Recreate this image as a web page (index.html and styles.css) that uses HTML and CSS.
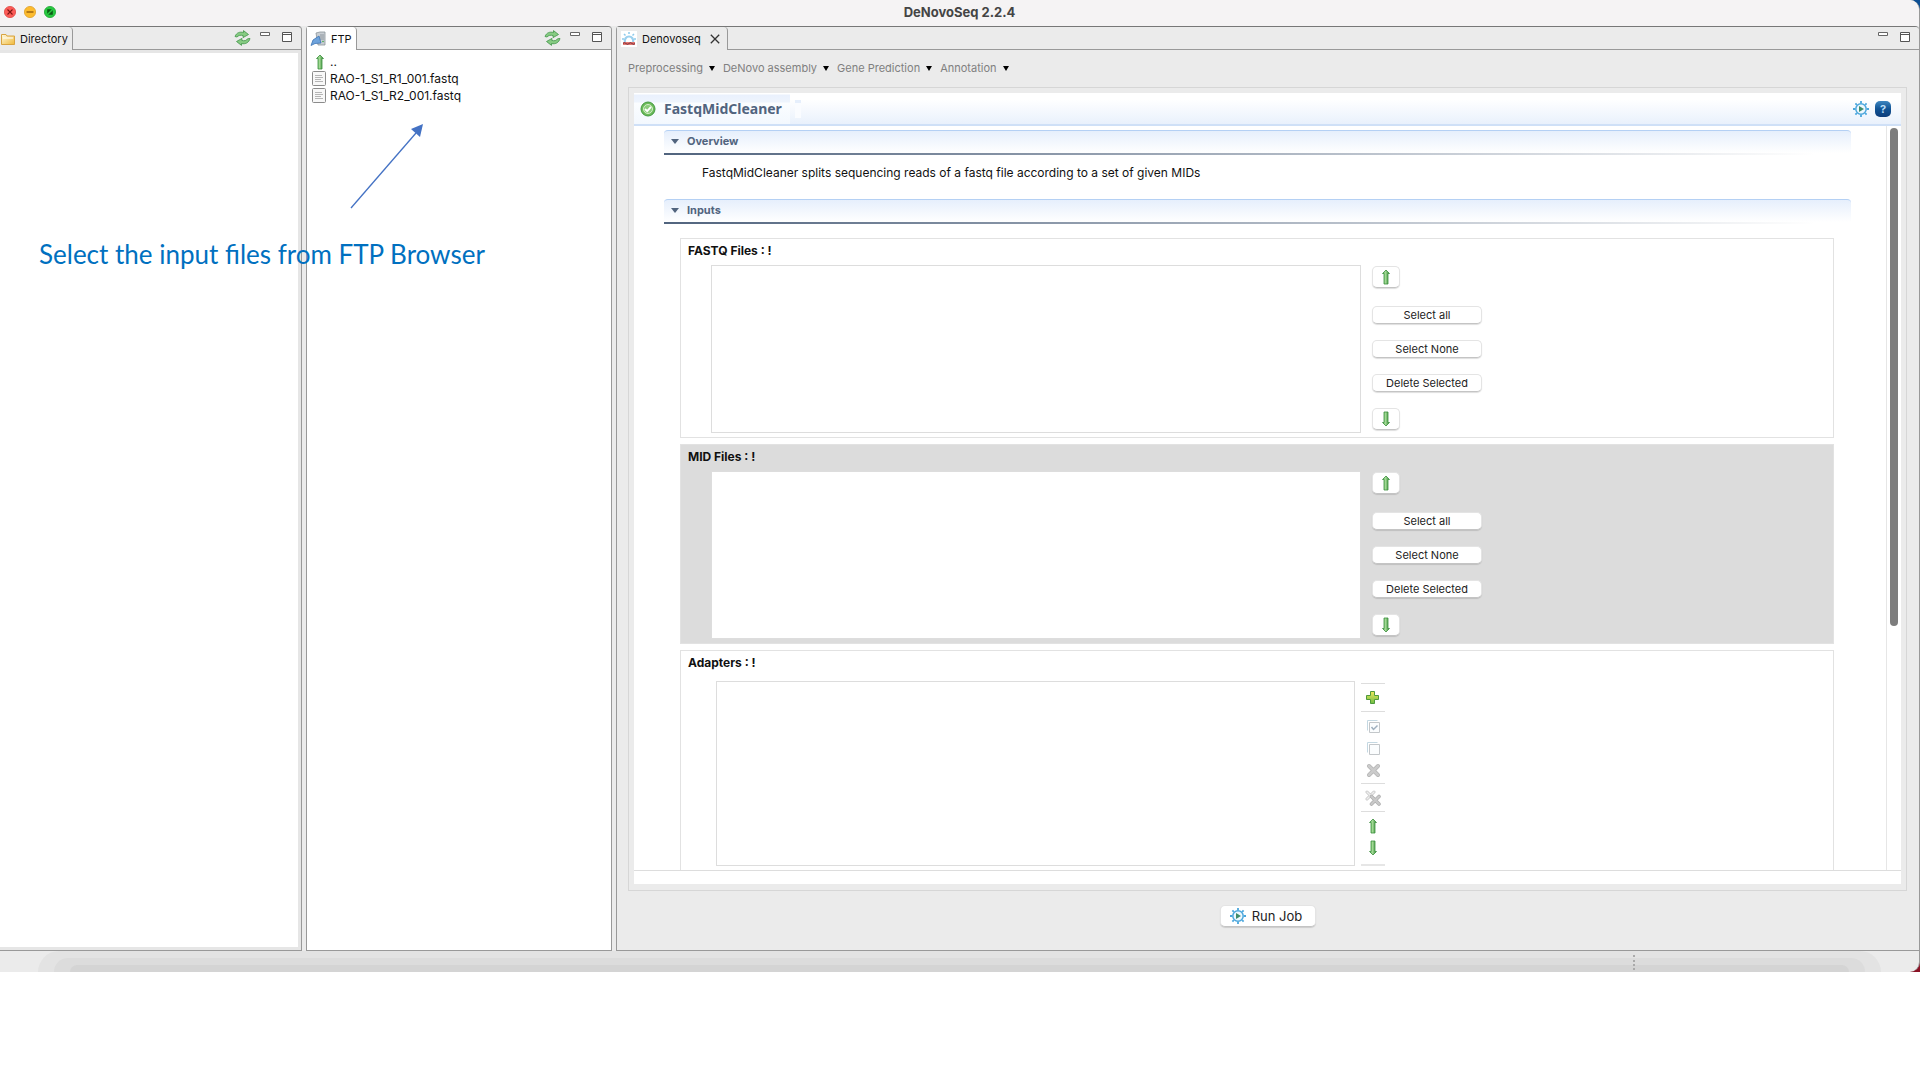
FILE: index.html
```html
<!DOCTYPE html>
<html lang="en">
<head>
<meta charset="utf-8">
<title>DeNovoSeq 2.2.4</title>
<link rel="stylesheet" href="styles.css">
</head>
<body>
<svg class="defs" aria-hidden="true">
  <defs>
    <linearGradient id="green" x1="0" x2="1"><stop offset="0" stop-color="#4ea64e"/><stop offset=".4" stop-color="#a6dd98"/><stop offset="1" stop-color="#2a812c"/></linearGradient>
    <linearGradient id="lime" x1="0" x2="0" y1="0" y2="1"><stop offset="0" stop-color="#f0e95c"/><stop offset="1" stop-color="#6dbd45"/></linearGradient>
    <linearGradient id="gold" x1="0" x2="1" y1="0" y2="1"><stop offset="0" stop-color="#fffbe0"/><stop offset="1" stop-color="#f0b93a"/></linearGradient>
  </defs>
  <symbol id="up" viewBox="0 0 16 16"><path d="M8 1 11.500 4.500H10V15H6V4.500H4.500Z" fill="url(#green)" stroke="#3b8f3d" stroke-width=".8"/></symbol>
  <symbol id="down" viewBox="0 0 16 16"><path d="M8 15 11.500 11.500H10V1H6V11.500H4.500Z" fill="url(#green)" stroke="#3b8f3d" stroke-width=".8"/></symbol>
  <symbol id="sync" viewBox="0 0 17 16"><g fill="#86cb82" stroke="#3f9447" stroke-width=".8" stroke-linejoin="round"><path d="M1 6.500C2.500 2.500 6 1.500 9.500 2.500L9.500 .6 14.500 4.500 9 7.600 9.200 5.600C6.500 4.800 4.500 5.400 3 7Z"/><path d="M16 8.500C15 12.500 11.500 14.500 7.500 13.500L7.500 15.400 2.500 11.500 8 8.400 7.800 10.400C10.500 11.200 12.500 10.600 13.500 8.800Z"/></g></symbol>
  <symbol id="min" viewBox="0 0 10 4"><path d="M.5 .5H9.500V3.500H.5Z" fill="#fff" stroke="#666"/></symbol>
  <symbol id="max" viewBox="0 0 10 10"><path d="M.5 .5H9.500V9.500H.5ZM.5 2.500H9.500" fill="#fff" stroke="#555"/></symbol>
  <symbol id="gear" viewBox="0 0 16 16"><circle cx="8" cy="8" r="5.200" fill="#eef8fe" stroke="#4aa6dc" stroke-width="1.500"/><path d="M8 0V2M8 14V16M0 8H2M14 8H16M2.400 2.400 3.800 3.800M12.200 12.200 13.600 13.600M2.400 13.600 3.800 12.200M12.200 3.800 13.600 2.400" stroke="#4aa6dc" stroke-width="1.800"/><path d="M6 5 11 8 6 11Z" fill="#3f8c6b"/></symbol>
  <symbol id="doc" viewBox="0 0 14 15"><rect x=".5" y=".5" width="13" height="14" rx="1" fill="#f8f8f8" stroke="#8b8b8b"/><path d="M3 4.500H10M3 6.500H11M3 8.500H9M3 10.500H11" stroke="#b5b5b5"/></symbol>
  <symbol id="tri" viewBox="0 0 8 5"><path d="M0 0H8L4 5Z" fill="#51647e"/></symbol>
</svg>

<div class="desktop">
<div class="window">
  <header class="titlebar">
    <div class="lights">
      <svg viewBox="0 0 12 12"><circle cx="6" cy="6" r="5.600" fill="#fc5b57" stroke="#df4744" stroke-width=".8"/><path d="M3.500 3.500 8.500 8.500M8.500 3.500 3.500 8.500" stroke="#7c1512" stroke-width="1.100"/></svg>
      <svg viewBox="0 0 12 12"><circle cx="6" cy="6" r="5.600" fill="#fdbb2e" stroke="#de9f28" stroke-width=".8"/><path d="M2.500 6H9.500" stroke="#955f0c" stroke-width="1.400"/></svg>
      <svg viewBox="0 0 12 12"><circle cx="6" cy="6" r="5.600" fill="#27c840" stroke="#1fa733" stroke-width=".8"/><path d="M3.200 7.800V3.200H7.800ZM4.200 8.800H8.800V4.200Z" fill="#0b5a14"/><path d="M3 9 9 3" stroke="#27c840"/></svg>
    </div>
    <h1 class="title">DeNovoSeq 2.2.4</h1>
  </header>

  <main class="workbench">
    <section class="pane pane-dir">
      <div class="tabs">
        <div class="tab">
          <svg class="ic-14" viewBox="0 0 14 12"><path d="M.5 11.500V1.500H5L6 3H13.500V11.500Z" fill="url(#gold)" stroke="#d9a441"/><path d="M2 5H12" stroke="#fff"/></svg>
          Directory
        </div>
        <div class="tools">
          <button class="tool tool-sync" aria-label="Refresh"><svg class="ic-sync"><use href="#sync"/></svg></button>
          <button class="tool" aria-label="Minimize"><svg class="ic-min"><use href="#min"/></svg></button>
          <button class="tool" aria-label="Maximize"><svg class="ic-max"><use href="#max"/></svg></button>
        </div>
      </div>
      <div class="dir-body"></div>
    </section>

    <section class="pane">
      <div class="tabs">
        <div class="tab tab-white">
          <svg class="ic-16" viewBox="0 0 16 16"><path d="M6 2 10 1H15V14H8Z" fill="#c9ced3" stroke="#8c949b" stroke-width=".8"/><path d="M10 4H14M10 6H14M10 8H14" stroke="#818a92" stroke-width=".8"/><path d="M1 14.500 3 9 9 5 11 12 5 12.500Z" fill="#6ea3dc" stroke="#3c74b4" stroke-width=".8"/><circle cx="13" cy="10.500" r=".8" fill="#3da545"/></svg>
          FTP
        </div>
        <div class="tools">
          <button class="tool tool-sync" aria-label="Refresh"><svg class="ic-sync"><use href="#sync"/></svg></button>
          <button class="tool" aria-label="Minimize"><svg class="ic-min"><use href="#min"/></svg></button>
          <button class="tool" aria-label="Maximize"><svg class="ic-max"><use href="#max"/></svg></button>
        </div>
      </div>
      <ul class="files">
        <li><svg class="ic-16"><use href="#up"/></svg>..</li>
        <li><svg class="ic-file"><use href="#doc"/></svg>RAO-1_S1_R1_001.fastq</li>
        <li><svg class="ic-file"><use href="#doc"/></svg>RAO-1_S1_R2_001.fastq</li>
      </ul>
    </section>

    <section class="pane pane-main">
      <div class="tabs">
        <div class="tab tab-main">
          <svg class="ic-16" viewBox="0 0 16 16"><path d="M0 0H16V16H0Z" fill="#fff"/><path d="M4 11A4.200 4.200 0 1 1 12 11" fill="none" stroke="#9bd0ee" stroke-width="2.200"/><path d="M8 1V3M1 8H3M13 8H15M3 3 4.500 4.500M13 3 11.500 4.500" stroke="#8fcbec" stroke-width="1.500"/><path d="M2 12.500H14" stroke="#d8574e" stroke-width="2.600"/><path d="M2 12.500Q3.500 10.500 5 12.500T8 12.500T11 12.500T14 12.500" fill="none" stroke="#7d3f4c"/></svg>
          Denovoseq
          <button class="tool" aria-label="Close tab"><svg class="ic-x" viewBox="0 0 10 10"><path d="M.8 .8 9.200 9.200M9.200 .8 .8 9.200" stroke="#333" stroke-width="1.300"/></svg></button>
        </div>
        <div class="tools">
          <button class="tool" aria-label="Minimize"><svg class="ic-min"><use href="#min"/></svg></button>
          <button class="tool" aria-label="Maximize"><svg class="ic-max"><use href="#max"/></svg></button>
        </div>
      </div>

      <nav class="menus">
        <button class="menu">Preprocessing<svg viewBox="0 0 6 5"><path d="M0 0H6L3 5Z"/></svg></button>
        <button class="menu">DeNovo assembly<svg viewBox="0 0 6 5"><path d="M0 0H6L3 5Z"/></svg></button>
        <button class="menu">Gene Prediction<svg viewBox="0 0 6 5"><path d="M0 0H6L3 5Z"/></svg></button>
        <button class="menu">Annotation<svg viewBox="0 0 6 5"><path d="M0 0H6L3 5Z"/></svg></button>
      </nav>

      <div class="frame">
        <div class="form">
          <div class="form-head">
            <h2 class="form-title">
              <svg class="ic-16" viewBox="0 0 16 16"><circle cx="8" cy="8" r="7" fill="#6cba58" stroke="#429a42"/><circle cx="8" cy="8" r="4.500" fill="#8ccc7c" stroke="#d2efca"/><path d="M5 8 7.200 10.200 11 5.800" fill="none" stroke="#fff" stroke-width="1.800"/></svg>
              FastqMidCleaner
            </h2>
            <span class="notch"></span>
            <div class="head-tools">
              <button class="tool" aria-label="Run"><svg class="ic-16"><use href="#gear"/></svg></button>
              <button class="tool help" aria-label="Help">?</button>
            </div>
          </div>

          <div class="viewport">
            <div class="content">
              <section>
                <h3 class="bar"><svg class="ic-tri"><use href="#tri"/></svg>Overview</h3>
                <p class="lead">FastqMidCleaner splits sequencing reads of a fastq file according to a set of given MIDs</p>
              </section>

              <section>
                <h3 class="bar"><svg class="ic-tri"><use href="#tri"/></svg>Inputs</h3>
                <div class="groups">
                  <div class="group">
                    <h4 class="label">FASTQ Files : !</h4>
                    <div class="picker">
                      <div class="list"></div>
                      <div class="actions">
                        <button class="btn btn-icon" aria-label="Move up"><svg class="ic-16"><use href="#up"/></svg></button>
                        <button class="btn">Select all</button>
                        <button class="btn">Select None</button>
                        <button class="btn">Delete Selected</button>
                        <button class="btn btn-icon" aria-label="Move down"><svg class="ic-16"><use href="#down"/></svg></button>
                      </div>
                    </div>
                  </div>

                  <div class="group group-grey">
                    <h4 class="label">MID Files : !</h4>
                    <div class="picker">
                      <div class="list"></div>
                      <div class="actions">
                        <button class="btn btn-icon" aria-label="Move up"><svg class="ic-16"><use href="#up"/></svg></button>
                        <button class="btn">Select all</button>
                        <button class="btn">Select None</button>
                        <button class="btn">Delete Selected</button>
                        <button class="btn btn-icon" aria-label="Move down"><svg class="ic-16"><use href="#down"/></svg></button>
                      </div>
                    </div>
                  </div>

                  <div class="group group-last">
                    <h4 class="label">Adapters : !</h4>
                    <div class="picker picker-adapters">
                      <div class="list"></div>
                      <div class="strip">
                        <div class="strip-set"><button class="tool" aria-label="Add"><svg class="ic-16" viewBox="0 0 16 16"><path d="M5.500 1.500H9.500V5.500H13.500V9.500H9.500V13.500H5.500V9.500H1.500V5.500H5.500Z" fill="url(#lime)" stroke="#4f9a3c"/></svg></button></div>
                        <div class="strip-set">
                          <button class="tool" aria-label="Check all"><svg class="ic-16" viewBox="0 0 16 16"><path d="M2.500 12.500V2.500H12.500" fill="none" stroke="#c4d8e2"/><path d="M4.500 4.500H14.500V14.500H4.500Z" fill="#fbfdfe" stroke="#c3c7ca"/><path d="M6.500 9 8.500 11.500 12.500 7.500" fill="none" stroke="#9fb0bf" stroke-width="1.500"/></svg></button>
                          <button class="tool" aria-label="Uncheck all"><svg class="ic-16" viewBox="0 0 16 16"><path d="M2.500 12.500V2.500H12.500" fill="none" stroke="#c4d8e2"/><path d="M4.500 4.500H14.500V14.500H4.500Z" fill="#fbfdfe" stroke="#c3c7ca"/></svg></button>
                          <button class="tool" aria-label="Delete"><svg class="ic-16" viewBox="0 0 16 16"><path d="M4 4 13 13M13 4 4 13" stroke="#b4b4b4" stroke-width="4" stroke-linecap="round"/><path d="M4 4 13 13M13 4 4 13" stroke="#cbcbcb" stroke-width="2.500" stroke-linecap="round"/></svg></button>
                        </div>
                        <div class="strip-set"><button class="tool" aria-label="Delete all"><svg class="ic-16" viewBox="0 0 16 16"><path d="M2 2 9 9M9 2 2 9" stroke="#c6c6c6" stroke-width="3" stroke-linecap="round"/><path d="M2 2 9 9M9 2 2 9" stroke="#eee" stroke-width="1.500" stroke-linecap="round"/><path d="M6.500 6.500 14 14M14 6.500 6.500 14" stroke="#b0b0b0" stroke-width="3.600" stroke-linecap="round"/><path d="M6.500 6.500 14 14M14 6.500 6.500 14" stroke="#c9c9c9" stroke-width="2" stroke-linecap="round"/></svg></button></div>
                        <div class="strip-set">
                          <button class="tool" aria-label="Move up"><svg class="ic-16"><use href="#up"/></svg></button>
                          <button class="tool" aria-label="Move down"><svg class="ic-16"><use href="#down"/></svg></button>
                        </div>
                      </div>
                    </div>
                  </div>
                </div>
              </section>
            </div>
            <div class="scroll"><div class="thumb"></div></div>
          </div>
        </div>
      </div>

      <div class="run-row">
        <button class="btn btn-run"><svg class="ic-16"><use href="#gear"/></svg>Run Job</button>
      </div>
    </section>
  </main>

  <footer class="status">
    <div class="shade shade-1"><div class="shade shade-2"><div class="shade shade-3"></div></div></div>
    <span class="grip"></span>
  </footer>
</div>
</div>

<p class="note">Select the input files from FTP Browser</p>
<svg class="pointer" viewBox="0 0 76 88" aria-hidden="true"><path d="M1 85 66 10" stroke="#4472c4" stroke-width="1.300"/><path d="M73 1 70 14 61 6Z" fill="#4472c4"/></svg>
</body>
</html>
```
FILE: styles.css
```css
* { box-sizing: border-box; }
body {
  margin: 0;
  background: #fff;
  color: #111;
  font: 12px/16px Inter, "Liberation Sans", sans-serif;
}
h1, h2, h3, h4, p, ul { margin: 0; padding: 0; font-size: inherit; }
svg { display: block; flex: none; }
button { font: inherit; color: inherit; }
.defs { position: absolute; width: 0; height: 0; }

.ic-14 { width: 14px; height: 12px; }
.ic-16 { width: 16px; height: 16px; }
.ic-sync { width: 17px; height: 16px; }
.ic-min { width: 10px; height: 4px; }
.ic-max { width: 10px; height: 10px; }
.ic-x { width: 10px; height: 10px; }
.ic-file { width: 14px; height: 15px; margin-right: 2px; }
.ic-tri { width: 8px; height: 5px; }
.tool { padding: 0; border: 0; background: none; display: block; }

.desktop { background: linear-gradient(#0d4f94 50%, #8b1124 50%); }
.window {
  background: #ebebeb;
  border-radius: 0 10px 10px 0;
  border-right: 1px solid #999;
  overflow: hidden;
}

.titlebar {
  display: grid;
  grid-template-columns: 1fr auto 1fr;
  align-items: center;
  height: 26px;
  padding: 0 4px 2px;
  background: #f5f3f4;
}
.lights { display: flex; gap: 8px; }
.lights svg { width: 12px; height: 12px; }
.title { font-size: 13px; font-weight: 700; color: #444; }

.workbench {
  display: grid;
  grid-template-columns: 302fr 306fr 1303fr;
  gap: 4px;
}
.pane {
  display: flex;
  flex-direction: column;
  min-width: 0;
  border: 1px solid #999;
  border-top-color: #777;
  border-radius: 4px 4px 0 0;
  background: #fff;
}
.pane-dir { border-left: 0; border-top-left-radius: 0; background: #e6e6e6; }
.pane-main { background: #ebebeb; border-right: 0; }
.dir-body { flex: 1; margin: 3px 3px 3px 0; background: #fff; }

.tabs {
  display: flex;
  height: 23px;
  background: linear-gradient(#999, #999) bottom / 100% 1px no-repeat #ebebeb;
  border-radius: 4px 4px 0 0;
}
.tab {
  display: flex;
  align-items: center;
  gap: 5px;
  padding: 0 4px 0 1px;
  border-right: 1px solid #999;
  border-radius: 0 4px 0 0;
  background: #ebebeb;
  font-size: 11px;
}
.tab-white { background: #fff; padding-left: 3px; }
.tab-main { padding: 0 7px 0 4px; }
.tab-main .tool { padding-left: 4px; }
.tools { display: flex; gap: 12px; margin-left: auto; padding: 4px 9px 0 0; }
.tools .tool { align-self: flex-start; }
.tools .tool-sync { margin: -1px -3px 0 0; }
.tools .ic-min, .tools .ic-max { margin-top: 1px; }

.files { list-style: none; padding: 3px 5px; }
.files li { display: flex; align-items: center; gap: 2px; height: 17px; }

.menus { display: flex; gap: 8px; padding: 10px 11px 0; height: 37px; }
.menu {
  display: flex;
  align-items: center;
  gap: 6px;
  height: 16px;
  padding: 0;
  border: 0;
  background: none;
  color: #808080;
  font-size: 11px;
}
.menu svg { width: 6px; height: 5px; }

.frame {
  margin: 0 12px 0 11px;
  padding: 5px 5px 6px;
  border: 1px solid #d6d6d6;
}
.form { background: #fff; padding-bottom: 13px; }
.form-head {
  display: flex;
  align-items: center;
  height: 33px;
  border-bottom: 2px solid #cfe0f7;
  background: linear-gradient(#fff 20%, #e9f1fc);
}
.form-title {
  display: flex;
  align-items: center;
  gap: 8px;
  align-self: stretch;
  padding: 0 8px 0 6px;
  background: linear-gradient(#fff 1px, #eaf1fd 2px, #eef4fd 9px, #fbfdff 10px, #f3f8fe);
  color: #51647e;
  font: 700 14px/20px "Noto Sans", "Open Sans", sans-serif;
}
.notch { width: 6px; height: 18px; margin-left: 5px; background: #fafcff; border-top: 3px solid #e6effc; }
.head-tools { display: flex; gap: 6px; margin-left: auto; padding-right: 10px; }
.help {
  width: 16px;
  height: 16px;
  border-radius: 5px;
  background: linear-gradient(#3d86c0, #115394 50%, #0c3d7c);
  color: #b9dcf6;
  font-size: 11px;
  font-weight: 700;
  line-height: 16px;
}

.viewport {
  display: flex;
  height: 745px;
  overflow: hidden;
  border-bottom: 1px solid #ddd;
}
.content { flex: 1; padding: 4px 35px 0 30px; border-right: 1px solid #e6e6e6; }
.scroll { width: 14px; padding: 2px 3px; }
.thumb { width: 8px; height: 498px; border-radius: 4px; background: #7d7d7d; }

.bar {
  display: flex;
  align-items: center;
  gap: 8px;
  height: 25px;
  padding: 0 7px 4px;
  border-top: 1px solid #b4d0f4;
  border-radius: 4px 4px 0 0;
  background:
    linear-gradient(90deg, #51647e, #fff 97%) bottom / 100% 2px no-repeat,
    linear-gradient(#e6effc, #fff 22px);
  color: #51647e;
  font-size: 11px;
  font-weight: 700;
}
.lead { padding: 10px 38px 18px; }

.groups { display: grid; gap: 6px; padding: 14px 17px 0 16px; }
.group { height: 200px; padding: 4px 7px; border: 1px solid #e2e2e2; }
.group-grey { background: #dcdcdc; }
.group-last { height: 240px; }
.label { font-weight: 700; }
.picker {
  display: grid;
  grid-template-columns: 650fr 454fr;
  gap: 11px;
  padding: 6px 0 0 23px;
}
.list { height: 168px; border: 1px solid #ddd; background: #fff; }
.actions { display: flex; flex-direction: column; align-items: flex-start; gap: 16px; }
.btn {
  width: 110px;
  height: 18px;
  padding: 0;
  border: 1px solid #e4e4e4;
  border-bottom-color: #c4c4c4;
  border-radius: 5px;
  background: #fff;
  box-shadow: 0 1px 1px #0002;
  color: #222;
  font-size: 11px;
  line-height: 14px;
}
.btn-icon { display: grid; place-items: center; width: 28px; height: 22px; margin: 1px 0 2px; }
.btn-icon:last-child { margin: 0; }
.picker-adapters { grid-template-columns: 639fr 465fr; gap: 6px; padding: 10px 0 0 28px; }
.picker-adapters .list { height: 185px; }

.strip { width: 24px; margin-top: 2px; border-bottom: 2px solid #e6e6e6; justify-self: start; }
.strip-set {
  display: grid;
  gap: 6px;
  padding: 6px 4px 5px;
  border-top: 1px solid #ddd;
}

.run-row { display: flex; justify-content: center; padding: 14px 0 23px; }
.btn-run {
  display: flex;
  align-items: center;
  justify-content: center;
  gap: 6px;
  width: 96px;
  height: 22px;
  padding-right: 4px;
  font-size: 13px;
}

.status { display: flex; height: 21px; position: relative; }
.shade { flex: 1; height: 100%; }
.shade-1 { margin: 0 38px; padding: 7px 16px 0; background: #e3e3e3; border-radius: 40px 40px 0 0; }
.shade-2 { padding: 7px 16px 0; background: #dcdcdc; border-radius: 40px 40px 0 0; }
.shade-3 { background: #d4d4d4; border-radius: 40px 40px 0 0; }
.grip {
  position: absolute;
  right: 14.8%;
  top: 4px;
  height: 15px;
  border-left: 2px dotted #aaa;
}

.note {
  position: absolute;
  left: 39px;
  top: 238px;
  color: #0070c0;
  font: 26px/32px Lato, "Open Sans", sans-serif;
  white-space: nowrap;
}
.pointer { position: absolute; left: 350px; top: 123px; width: 76px; height: 88px; }
```
